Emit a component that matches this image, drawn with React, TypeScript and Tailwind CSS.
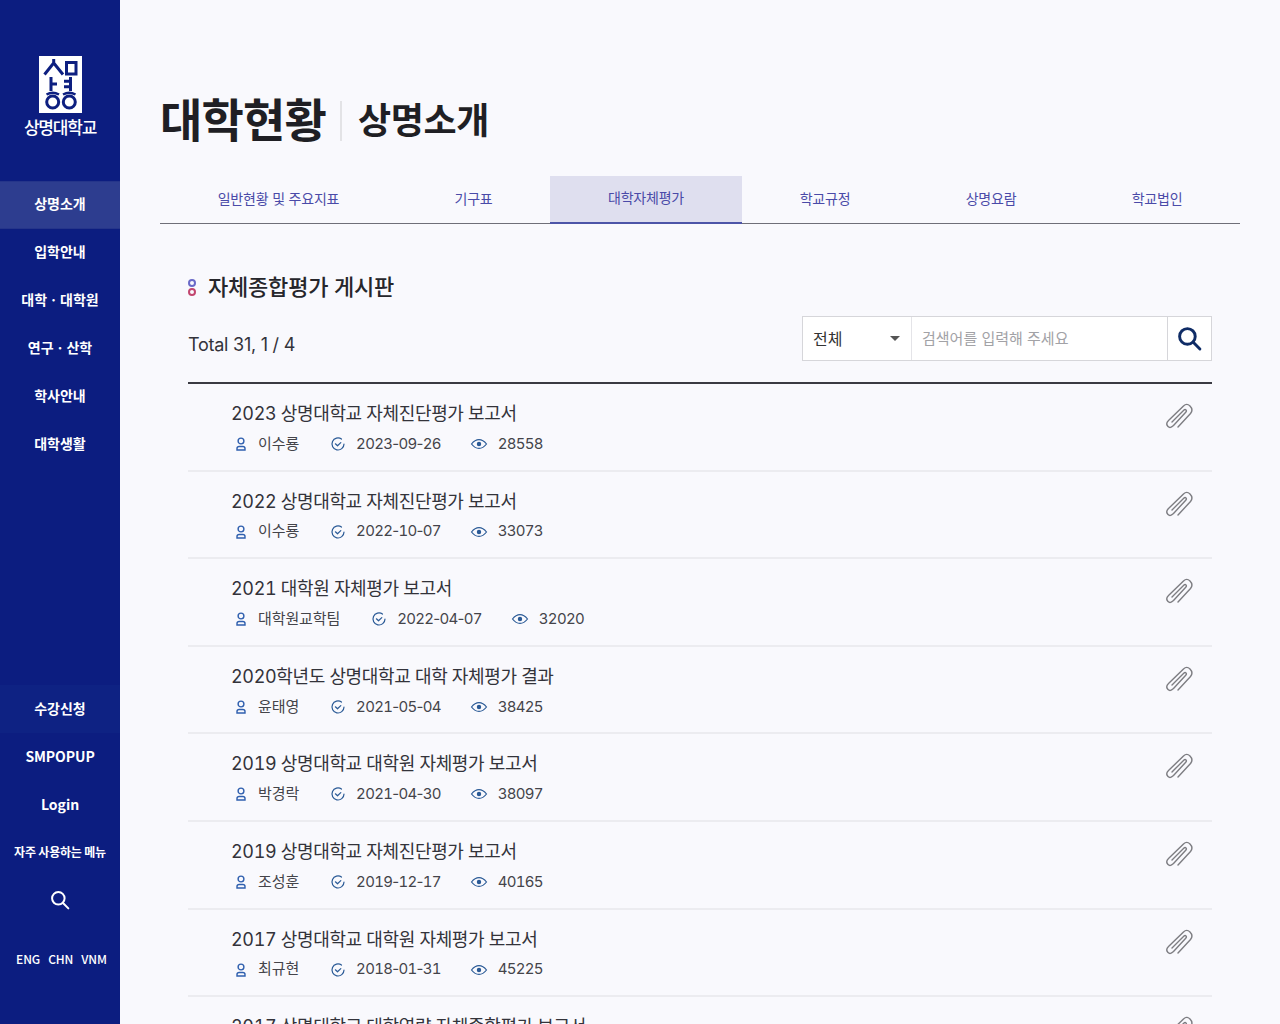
import React from "react";

const font = '"Inter","Noto Sans CJK KR","Noto Sans",sans-serif';

function Logo() {
  return (
    <svg width="43" height="57" viewBox="0 0 43 57" className="block">
      <rect width="43" height="57" fill="#fff" />
      <g fill="none" stroke="#0d1f80" strokeWidth="3">
        <path d="M14.7 3 V7 L5.5 18.5 M14.7 7 L24 18.5" />
        <rect x="27.5" y="6.5" width="9.5" height="11.5" />
        <path d="M12 21 V35 M12 28 H18" />
        <path d="M25 25.3 H31 M25 30.7 H31 M31.5 21 V35" />
        <path d="M7.5 38.5 Q13.7 35 20 38.5 M24 38.5 Q30.3 35 36.5 38.5" strokeWidth="2.4" />
        <circle cx="13.7" cy="46" r="6" />
        <circle cx="30.3" cy="46" r="6" />
      </g>
    </svg>
  );
}

function Paperclip() {
  return (
    <svg width="28" height="28" viewBox="0 0 28 28" fill="none" stroke="#7d7d82" strokeWidth="1.4" strokeLinecap="round" strokeLinejoin="round">
      <path d="M13 25 L25.5 11.5 C27.5 9 27 6 25 4 C23 2 20.5 2 18.5 4 L3.5 18.5 C1.5 20.5 1.5 23 3 24.5 C4.5 26 6.5 25.5 8.5 23.5 L20.5 10.5 C21.5 9.5 21.5 8.5 21 8 C20.5 7.5 19.5 7.5 18.5 8.5 L7 20" />
    </svg>
  );
}

function UserIcon() {
  return (
    <svg width="12" height="16" viewBox="1 0 12 16" fill="none" stroke="#2f5fae" strokeWidth="1.4">
      <circle cx="7" cy="5" r="2.9" />
      <path d="M3 14 V12.6 C3 11.2 4 10.5 5.2 10.5 H8.8 C10 10.5 11 11.2 11 12.6 V14 Z" />
    </svg>
  );
}
function CheckIcon() {
  return (
    <svg width="16" height="16" viewBox="0 0 16 16" fill="none" stroke="#2a5a96" strokeWidth="1.2" strokeLinecap="round" strokeLinejoin="round">
      <path d="M14 8 A6 6 0 1 1 11.5 3.1" />
      <path d="M5.4 7.8 L7.5 9.8 L10.8 6.6" />
    </svg>
  );
}
function EyeIcon() {
  return (
    <svg width="18" height="16" viewBox="0 0 18 16" fill="none" stroke="#2a5a96" strokeWidth="1.2">
      <path d="M1.5 8 C4 4.8 6.4 3.6 9 3.6 C11.6 3.6 14 4.8 16.5 8 C14 11.2 11.6 12.4 9 12.4 C6.4 12.4 4 11.2 1.5 8 Z" />
      <circle cx="9" cy="8" r="1.6" fill="#2a5a96" />
    </svg>
  );
}

function SearchIcon({ color, w, size }: { color: string; w: number; size: number }) {
  return (
    <svg width={size} height={size} viewBox="0 0 24 24" fill="none" stroke={color} strokeWidth={w} strokeLinecap="round">
      <circle cx="10" cy="10" r="7.5" />
      <path d="M15.6 15.6 L22 22" />
    </svg>
  );
}

function DateText({ value }: { value: string }) {
  const parts = value.split("-");
  return (
    <span className="whitespace-nowrap">
      {parts.map((p, i) => (
        <React.Fragment key={i}>
          {i > 0 && <span className="normal-nums">-</span>}
          <span className="tabular-nums">{p}</span>
        </React.Fragment>
      ))}
    </span>
  );
}

const topNav = ["입학안내", "대학ㆍ대학원", "연구ㆍ산학", "학사안내", "대학생활"];
const tabs: [string, string][] = [
  ["일반현황 및 주요지표", "w-[237px]"],
  ["기구표", "w-[153px]"],
  ["대학자체평가", "w-[192px]"],
  ["학교규정", "w-[166px]"],
  ["상명요람", "w-[166px]"],
  ["학교법인", "w-[166px]"],
];
const rows: [string, string, string, string][] = [
  ["2023 상명대학교 자체진단평가 보고서", "이수룡", "2023-09-26", "28558"],
  ["2022 상명대학교 자체진단평가 보고서", "이수룡", "2022-10-07", "33073"],
  ["2021 대학원 자체평가 보고서", "대학원교학팀", "2022-04-07", "32020"],
  ["2020학년도 상명대학교 대학 자체평가 결과", "윤태영", "2021-05-04", "38425"],
  ["2019 상명대학교 대학원 자체평가 보고서", "박경락", "2021-04-30", "38097"],
  ["2019 상명대학교 자체진단평가 보고서", "조성훈", "2019-12-17", "40165"],
  ["2017 상명대학교 대학원 자체평가 보고서", "최규현", "2018-01-31", "45225"],
  ["2017 상명대학교 대학역량 자체종합평가 보고서", "최규현", "2018-01-31", "45225"],
];

function NavItem({ label, active, cls }: { label: string; active?: boolean; cls?: string }) {
  return (
    <div className={`h-12 flex items-center justify-center text-[14px] font-bold text-white ${active ? "bg-[#2d3d8f] border-y border-[#25358a]" : ""} ${cls ?? ""}`}>
      {label}
    </div>
  );
}

export default function App() {
  return (
    <div className="flex h-[1024px] w-[1280px] overflow-hidden bg-[#f9f9fd] text-[#222]" style={{ fontFamily: font }}>
      <aside className="w-[120px] shrink-0 bg-[#0c1d80] flex flex-col font-['Noto_Sans_CJK_KR',sans-serif]">
        <div className="h-[181px] pt-[56px] flex flex-col items-center">
          <Logo />
          <div className="mt-[1px] text-[17px] leading-[26px] font-medium text-white tracking-[-1.2px] whitespace-nowrap">상명대학교</div>
        </div>
        <NavItem label="상명소개" active cls="pb-[3px]" />
        {topNav.map((t) => (
          <NavItem key={t} label={t} cls="pb-[3px]" />
        ))}
        <div className="mt-[216px]">
          <NavItem label="수강신청" cls="bg-[#0e2283] pb-[2px]" />
          <NavItem label="SMPOPUP" cls="pb-[2px] tracking-[-0.1px]" />
          <NavItem label="Login" cls="pb-[2px]" />
          <div className="h-[47px] pb-[2px] flex items-center justify-center text-[12px] font-bold text-white tracking-[-0.2px] whitespace-nowrap">자주 사용하는 메뉴</div>
          <div className="h-[48px] flex items-center justify-center">
            <SearchIcon color="#fff" w={2.4} size={20} />
          </div>
          <div className="h-[68px] pt-[2px] pl-[3px] flex items-center justify-center gap-2 text-[12px] font-medium text-white tracking-[-0.1px]">
            <span>ENG</span>
            <span>CHN</span>
            <span>VNM</span>
          </div>
        </div>
      </aside>

      <main className="flex-1 min-w-0 px-10">
        <div className="h-[176px] pt-[91px] flex items-start">
          <h1 className="text-[46px] leading-[58px] font-bold text-[#1f1f24] tracking-[-0.8px]">대학현황</h1>
          <div className="ml-[14px] mt-[10px] w-[2px] h-[40px] bg-[#e3e3e6]" />
          <h2 className="ml-[16px] mt-[7px] text-[36px] leading-[46px] font-bold text-[#1f1f24] tracking-[-0.4px]">상명소개</h2>
        </div>

        <nav className="flex h-[48px] border-b border-[#6f6f78]">
          {tabs.map(([t, w], i) => (
            <div
              key={t}
              className={`${w} h-[48px] pb-[3px] flex items-center justify-center text-[14px] text-[#4a4aa8] tracking-[-0.2px] ${i === 2 ? "bg-[#dfdfef] border-b-2 border-[#4d55a8]" : ""}`}
            >
              {t}
            </div>
          ))}
        </nav>

        <section className="px-7">
          <div className="mt-[45px] h-[36px] flex items-center gap-[12px]">
            <div className="flex flex-col gap-[1px]">
              <span className="block w-2 h-2 rounded-full border-2 border-[#6a6ac8]" />
              <span className="block w-2 h-2 rounded-full border-2 border-[#c2466f]" />
            </div>
            <h3 className="text-[22px] leading-[36px] font-medium text-[#26262b] tracking-[-0.2px]">자체종합평가 게시판</h3>
          </div>

          <div className="mt-[11px] h-[45px] flex items-center justify-between">
            <div className="text-[18px] text-[#33333a] mt-[12px] tracking-[-0.25px]">Total 31, 1 / 4</div>
            <div className="flex h-[45px] w-[410px] bg-white border border-[#d6d6da]">
              <div className="w-[109px] flex items-center justify-between pl-[10px] pr-[11px] border-r border-[#e4e4e8] text-[16px] text-[#333]">
                <span>전체</span>
                <span className="block w-0 h-0 border-x-[5px] border-x-transparent border-t-[5px] border-t-[#555]" />
              </div>
              <div className="flex-1 flex items-center pl-[10px] pt-[1px] text-[15px] text-[#a2a2a6]">검색어를 입력해 주세요</div>
              <div className="w-[44px] border-l border-[#d6d6da] flex items-center justify-center">
                <SearchIcon color="#0f2c66" w={2.8} size={25} />
              </div>
            </div>
          </div>

          <div className="mt-[21px] border-t-2 border-[#3a3a42]">
            {rows.map(([title, author, date, views]) => (
              <article key={title + date} className="h-[87.6px] border-b-2 border-[#ececf0] flex justify-between pl-[43px] pr-[19px]">
                <div>
                  <div className="mt-[17px] h-[26px] leading-[26px] text-[18px] text-[#33333a] tracking-[-0.35px] tabular-nums whitespace-nowrap">{title}</div>
                  <div className="mt-[5px] h-[24px] flex items-center text-[15px] text-[#44444a] tracking-[-0.7px]">
                    <span className="ml-[4px]"><UserIcon /></span>
                    <span className="ml-[11px] text-[15px] tracking-[-0.1px]">{author}</span>
                    <span className="ml-[31px]"><CheckIcon /></span>
                    <span className="ml-[10px]"><DateText value={date} /></span>
                    <span className="ml-[29px]"><EyeIcon /></span>
                    <span className="ml-[10px] tabular-nums">{views}</span>
                  </div>
                </div>
                <div className="mt-[18px]">
                  <Paperclip />
                </div>
              </article>
            ))}
          </div>
        </section>
      </main>
    </div>
  );
}
